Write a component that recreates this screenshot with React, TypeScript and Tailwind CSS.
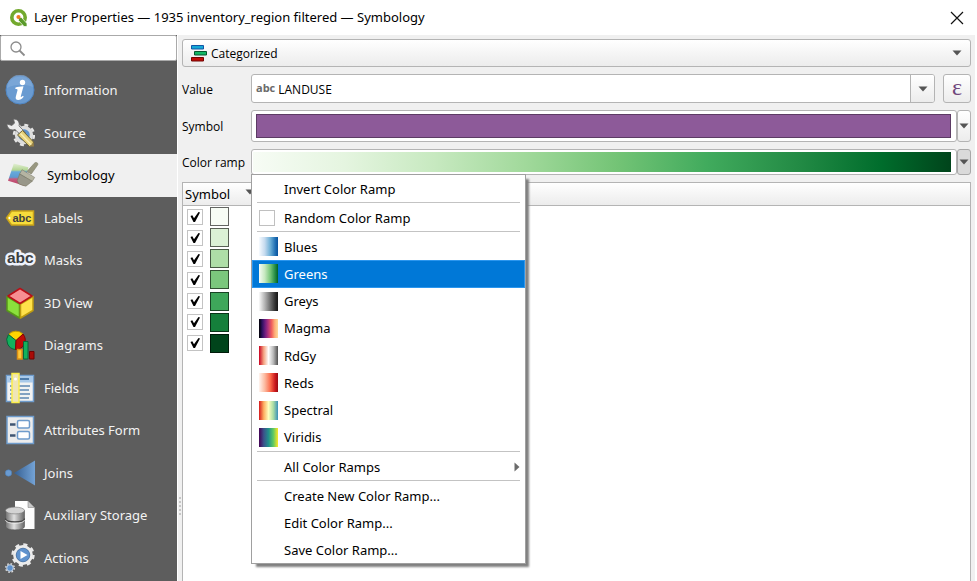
import { useState } from "react";
import type { ReactNode } from "react";

interface NavItem {
    label: string;
    icon: ReactNode;
}

interface Ramp {
    name: string;
    swatch: string;
}

const InformationIcon = () => (
    <svg viewBox="0 0 30 30" className="w-[30px] h-[30px]">
        <circle cx="15" cy="15" r="14" fill="#6a9bd1" stroke="#4f86c4" strokeWidth="1" />
        <path d="M2 13a13 13 0 0 1 26-1c-8-3-18-3-26 1z" fill="#86aedb" opacity=".6" />
        <circle cx="17.500" cy="7.500" r="2.700" fill="#fff" />
        <path d="M10.500 12.500c2-.5 5-1 8-1.200l-2.700 10c-.2 1 .8.800 2.200-.5l.7.900c-1.700 2.200-3.700 3.300-5.500 3.300-2.200 0-2.900-1.300-2.400-3.200l1.700-6.600c.2-.9-.3-1.200-2.200-1.200z" fill="#fff" />
    </svg>
);

const SourceIcon = () => (
    <svg viewBox="0 0 30 30" className="w-[30px] h-[30px]">
        <circle cx="19" cy="17" r="10" fill="none" stroke="#e6e6e6" strokeWidth="2.400" strokeDasharray="3.930 3.930" />
        <circle cx="19" cy="17" r="7.500" fill="#5f92c9" stroke="#dedede" strokeWidth="3.400" />
        <path d="M2 6l5 1.500L9.500 5 8.500 1c4 0 6.500 3 5.500 7l7 7-3.500 3.500-7.500-7C6 13 2 10.500 2 6z" fill="#ececec" stroke="#666" strokeWidth=".8" />
        <path d="M12.500 17l5-4.500 11 11.500c-.5 2.500-1.500 3.500-4 4.500z" fill="#e6d17a" stroke="#6d6335" strokeWidth="1" />
        <path d="M15.500 15.500l11 11.500" stroke="#f8edb2" strokeWidth="1.500" />
        <path d="M24.500 28.500l4-4 .5 4z" fill="#9a8348" />
    </svg>
);

const SymbologyIcon = () => (
    <svg viewBox="0 0 32 28" className="w-8 h-7">
        <defs>
            <linearGradient id="paint" x1="0" x2="0" y1="0" y2="1">
                <stop offset="0" stopColor="#e4efd6" />
                <stop offset=".3" stopColor="#b3d693" />
                <stop offset=".38" stopColor="#66a9dc" />
                <stop offset=".62" stopColor="#5d9bd0" />
                <stop offset=".7" stopColor="#c65a7d" />
                <stop offset="1" stopColor="#b83e63" />
            </linearGradient>
        </defs>
        <path d="M6 2l15 4-4 19L0 20z" fill="url(#paint)" />
        <path d="M19.500 10.500l7.500-8.500c1.500-2 5-.5 3.500 1.800L24 13z" fill="#989780" stroke="#7a7962" strokeWidth=".6" />
        <path d="M14.500 8.500l13 8-2.500 4-13-7.500z" fill="#b5b4a2" stroke="#7b7a68" strokeWidth=".6" />
        <path d="M12 13l13 7.500-6.500 5-4-1-3.500-1.500-1.500-3z" fill="#98978a" stroke="#77765f" strokeWidth=".6" />
    </svg>
);

const LabelsIcon = () => (
    <svg viewBox="0 0 30 30" className="w-[30px] h-[30px]">
        <path d="M1.500 15l5-7h22v14h-22z" fill="#f7dc3b" stroke="#c9a31a" strokeWidth="1.500" />
        <circle cx="4.500" cy="15" r="1" fill="#fff" />
        <text x="7.500" y="18.500" fontSize="11" fontWeight="700" fontFamily="Liberation Sans, sans-serif" fill="#3d3f3f">abc</text>
    </svg>
);

const MasksIcon = () => (
    <svg viewBox="0 0 32 30" className="w-8 h-[30px]">
        <text x="2" y="18" fontSize="16" fontWeight="700" fontFamily="Liberation Sans, sans-serif" fill="#3b3e40" stroke="#eef2fc" strokeWidth="5" strokeLinejoin="round" paintOrder="stroke">abc</text>
    </svg>
);

const CubeIcon = () => (
    <svg viewBox="0 0 30 32" className="w-[30px] h-8">
        <g strokeLinejoin="round" strokeWidth="1.500">
            <path d="M2 9.500v14L14.500 31V17z" fill="#8be03c" stroke="#57981a" />
            <path d="M28 9.500v14L15.500 31V17z" fill="#ffe14a" stroke="#bd9b10" />
            <path d="M15 1.500L27 9l-12 7.500L3 9z" fill="#f78f92" stroke="#b80f16" />
        </g>
    </svg>
);

const DiagramsIcon = () => (
    <svg viewBox="0 0 30 32" className="w-[30px] h-8">
        <path d="M11 11.500L3.500 5.500A10 10 0 0 1 18 5z" fill="#ffd400" stroke="#c59a00" />
        <path d="M11 11.500L3.500 5.500a9.500 9.500 0 0 0 7 15z" fill="#12b15c" stroke="#08653a" />
        <path d="M11 11.500L18 5a9.500 9.500 0 0 1-7.500 15.500z" fill="#c00c07" stroke="#7f0503" />
        <path d="M12.500 20.500h4.500v9.500h-4.500z" fill="#ffc83a" stroke="#dc8e14" strokeWidth="1.500" />
        <path d="M18.500 12.500H23V30h-4.500z" fill="#12b15c" stroke="#08653a" />
        <path d="M24.500 22.500H29V30h-4.500z" fill="#a90c07" stroke="#6f0503" />
    </svg>
);

const FieldsIcon = () => (
    <svg viewBox="0 0 30 32" className="w-[30px] h-8">
        <path d="M1.500 3.500h27v26h-27z" fill="#f2f2f2" stroke="#6f9ccc" strokeWidth="1.500" />
        <path d="M2 4h26v6.500H2z" fill="#a9c9ea" />
        <path d="M15 7h9M5 7h2" stroke="#4e7cab" strokeWidth="2" />
        <path d="M5 14h20M5 18h19M5 22h20M5 26h19" stroke="#5d87b3" strokeWidth="1.500" />
        <path d="M7 1.500h7v29H7z" fill="#efe5b6" stroke="#fbed4a" strokeWidth="1.500" />
        <circle cx="10.500" cy="7" r="1.500" fill="#fff" />
    </svg>
);

const FormIcon = () => (
    <svg viewBox="0 0 30 30" className="w-[30px] h-[30px]">
        <path d="M2 1.500h26.500v27H2z" fill="#ececec" stroke="#6f9ccc" strokeWidth="1.500" />
        <path d="M5 9.500h5.500M5 20.500h5.500" stroke="#3f5573" strokeWidth="2.500" />
        <rect x="12.500" y="5.500" width="12" height="7.500" rx="1.500" fill="#fff" stroke="#6f9ccc" strokeWidth="1.500" />
        <rect x="12.500" y="16.500" width="12" height="7.500" rx="1.500" fill="#fff" stroke="#6f9ccc" strokeWidth="1.500" />
    </svg>
);

const JoinsIcon = () => (
    <svg viewBox="0 0 30 30" className="w-[30px] h-[30px]">
        <defs>
            <linearGradient id="joins" x1="0" x2="1">
                <stop offset="0" stopColor="#355f92" />
                <stop offset="1" stopColor="#74a3d6" />
            </linearGradient>
        </defs>
        <circle cx="3.500" cy="15" r="3.200" fill="#6a9bd1" stroke="#4a7db7" strokeWidth=".6" />
        <path d="M9 15L30 2.500v25z" fill="url(#joins)" />
    </svg>
);

const StorageIcon = () => (
    <svg viewBox="0 0 30 32" className="w-[30px] h-8">
        <defs>
            <linearGradient id="disk" x1="0" x2="1">
                <stop offset="0" stopColor="#6e6e6e" />
                <stop offset=".45" stopColor="#e0e0e0" />
                <stop offset="1" stopColor="#656565" />
            </linearGradient>
        </defs>
        <path d="M10 2h13l6.500 6.500V30H10z" fill="#fdfdfd" />
        <path d="M23 2v6.500h6.500z" fill="#c9c9c9" stroke="#777" strokeWidth=".5" />
        <path d="M.5 11.500v16c0 4.500 19 4.500 19 0v-16z" fill="url(#disk)" stroke="#555" strokeWidth=".6" />
        <ellipse cx="10" cy="11.500" rx="9.500" ry="3.400" fill="#d3d3d3" stroke="#757575" strokeWidth=".6" />
        <path d="M.5 19.500c0 4.500 19 4.500 19 0" fill="none" stroke="#444" strokeWidth="1.300" />
        <path d="M.5 21c0 4.500 19 4.500 19 0" fill="none" stroke="#eee" strokeWidth=".8" />
    </svg>
);

const ActionsIcon = () => (
    <svg viewBox="0 0 30 32" className="w-[30px] h-8">
        <circle cx="18" cy="13" r="10.500" fill="none" stroke="#e9e9e9" strokeWidth="2.400" strokeDasharray="4.120 4.120" />
        <circle cx="18" cy="13" r="8.200" fill="#5f92cd" stroke="#ececec" strokeWidth="3.400" />
        <circle cx="18" cy="13" r="6.800" fill="#5f92cd" stroke="#39659a" strokeWidth=".7" />
        <path d="M15.500 9l7 4-7 4z" fill="#fff" />
        <circle cx="5" cy="26" r="4.300" fill="none" stroke="#ddd" strokeWidth="1.400" strokeDasharray="1.690 1.690" />
        <circle cx="5" cy="26" r="3.300" fill="#5f92cd" stroke="#cfdcec" strokeWidth=".9" />
    </svg>
);

const CategorizedIcon = () => (
    <svg viewBox="0 0 18 18" className="w-[18px] h-[18px]">
        <path d="M1.500 1.500h12v3.500h-12z" fill="#13a8d6" stroke="#1255a5" />
        <path d="M4.500 7.500h12V11h-12z" fill="#13b765" stroke="#08572f" />
        <path d="M1.500 13.500h12V17h-12z" fill="#c20d08" stroke="#700502" />
    </svg>
);

const QgisLogo = () => (
    <svg viewBox="0 0 20 18" className="w-5 h-[18px]">
        <circle cx="9.500" cy="8.500" r="6.700" fill="none" stroke="#73a92e" strokeWidth="3.600" />
        <path d="M9.500 8.500h3l5.500 6v3h-3l-5.500-6z" fill="#5a9a2a" stroke="#fff" strokeWidth=".7" />
        <circle cx="9.500" cy="8" r="2.100" fill="#ee7a22" />
    </svg>
);

const DownArrow = () => (
    <svg viewBox="0 0 10 6" className="w-[10px] h-[6px] shrink-0">
        <path d="M.5.500h9L5 5.500z" fill="#555" />
    </svg>
);

const navItems: NavItem[] = [
    { label: "Information", icon: <InformationIcon /> },
    { label: "Source", icon: <SourceIcon /> },
    { label: "Symbology", icon: <SymbologyIcon /> },
    { label: "Labels", icon: <LabelsIcon /> },
    { label: "Masks", icon: <MasksIcon /> },
    { label: "3D View", icon: <CubeIcon /> },
    { label: "Diagrams", icon: <DiagramsIcon /> },
    { label: "Fields", icon: <FieldsIcon /> },
    { label: "Attributes Form", icon: <FormIcon /> },
    { label: "Joins", icon: <JoinsIcon /> },
    { label: "Auxiliary Storage", icon: <StorageIcon /> },
    { label: "Actions", icon: <ActionsIcon /> },
];

const ramps: Ramp[] = [
    { name: "Blues", swatch: "bg-[linear-gradient(90deg,#f7fbff,#c6dbef_30%,#6baed6_60%,#2171b5_85%,#08519c)]" },
    { name: "Greens", swatch: "bg-[linear-gradient(90deg,#f7fcf5,#c7e9c0_30%,#74c476_60%,#238b45_85%,#006022)]" },
    { name: "Greys", swatch: "bg-[linear-gradient(90deg,#fafafa,#b5b5b5_30%,#6b6b6b_60%,#303030_85%,#151515)]" },
    { name: "Magma", swatch: "bg-[linear-gradient(90deg,#000004,#2c115f,#721f81,#b73779,#f1605d,#feb078,#fcd99a)]" },
    { name: "RdGy", swatch: "bg-[linear-gradient(90deg,#ca0020,#f4a582,#ffffff,#bababa,#505050)]" },
    { name: "Reds", swatch: "bg-[linear-gradient(90deg,#fff5f0,#fcbba1_30%,#fb6a4a_60%,#cb181d_85%,#950b13)]" },
    { name: "Spectral", swatch: "bg-[linear-gradient(90deg,#d7191c,#fdae61,#ffffbf,#abdda4,#3b90b8)]" },
    { name: "Viridis", swatch: "bg-[linear-gradient(90deg,#440154,#3b528b,#21908c,#5dc963,#fde725)]" },
];

const categories = ["#f7fcf5", "#dbf1d5", "#aedea7", "#7bc77c", "#3ea75a", "#157f3b", "#00441b"];

const Separator = () => <div role="separator" className="mx-[5px] h-[2px] border-t border-[#c3c3c3]" />;

function MenuItem({ children, icon, active, onClick }: { children: ReactNode; icon?: ReactNode; active?: boolean; onClick?: () => void }) {
    return (
        <button
            type="button"
            role="menuitem"
            onClick={onClick}
            className={`flex h-full min-h-[27px] w-full items-center border text-left ${
                active ? "border-[#2b96ee] bg-[#0078d7] text-white" : "border-transparent"
            }`}
        >
            <span className="flex w-[31px] shrink-0 pl-[6px]">{icon}</span>
            {children}
        </button>
    );
}

function RampMenu({ selected, onSelect }: { selected: string; onSelect: (name: string) => void }) {
    return (
        <div
            role="menu"
            className="absolute left-0 top-full z-10 -mt-px w-[275px] border border-[#a0a0a0] bg-white font-['Noto_Sans',sans-serif] text-[13px] leading-5 text-black shadow-[4px_4px_2px_-1px_#808080]"
        >
            <MenuItem>Invert Color Ramp</MenuItem>
            <Separator />
            <MenuItem icon={<span className="h-4 w-4 border border-[#c0c0c0] bg-white" />}>Random Color Ramp</MenuItem>
            <Separator />
            <div className="grid h-[218px] grid-rows-8">
                {ramps.map((ramp) => (
                    <MenuItem
                        key={ramp.name}
                        active={ramp.name === selected}
                        onClick={() => onSelect(ramp.name)}
                        icon={<span className={`h-[19px] w-[19px] ${ramp.swatch}`} />}
                    >
                        {ramp.name}
                    </MenuItem>
                ))}
            </div>
            <Separator />
            <MenuItem>
                All Color Ramps
                <svg viewBox="0 0 6 10" className="ml-auto mr-1 h-[10px] w-[6px]">
                    <path d="M.5.500v9L5.500 5z" fill="#6b6b6b" />
                </svg>
            </MenuItem>
            <Separator />
            <MenuItem>Create New Color Ramp...</MenuItem>
            <MenuItem>Edit Color Ramp...</MenuItem>
            <MenuItem>Save Color Ramp...</MenuItem>
        </div>
    );
}

function Sidebar({ current, onChange }: { current: string; onChange: (label: string) => void }) {
    return (
        <aside className="flex w-[177px] shrink-0 flex-col bg-[#5d5d5d] font-['Noto_Sans',sans-serif]">
            <label className="flex h-[26px] items-center rounded-[2px] border border-[#aaa] bg-white pl-2">
                <svg viewBox="0 0 17 17" className="h-[17px] w-[17px] shrink-0" fill="none" stroke="#8c8c8c">
                    <circle cx="7" cy="7" r="5" strokeWidth="1.300" />
                    <path d="M10.500 10.500l5 5" strokeWidth="1.800" />
                </svg>
                <input type="text" aria-label="Search" className="w-full min-w-0 px-2 text-[13px] outline-none" />
            </label>
            <nav className="mt-2 grid h-[510px] grid-rows-12">
                {navItems.map((item) => (
                    <button
                        key={item.label}
                        type="button"
                        onClick={() => onChange(item.label)}
                        className={`flex items-center text-left text-[13px] leading-5 ${
                            item.label === current ? "bg-[#f0f0f0] pl-2 text-black" : "pl-[5px] text-[#f3f3f3]"
                        }`}
                    >
                        <span className="mr-2 flex w-[31px] shrink-0">{item.icon}</span>
                        {item.label}
                    </button>
                ))}
            </nav>
        </aside>
    );
}

export default function App() {
    const [tab, setTab] = useState("Symbology");
    const [ramp, setRamp] = useState("Greens");
    const [value, setValue] = useState("LANDUSE");

    return (
        <div className="flex min-h-screen flex-col bg-white font-['Open_Sans','Noto_Sans',sans-serif] text-black">
            <header className="flex h-[35px] items-center pl-[9px] pr-[13px]">
                <QgisLogo />
                <h1 className="ml-[5px] pb-px font-['Noto_Sans',sans-serif] text-[13px] leading-5">Layer Properties — 1935 inventory_region filtered — Symbology</h1>
                <button type="button" aria-label="Close" className="ml-auto">
                    <svg viewBox="0 0 14 14" className="h-[14px] w-[14px]">
                        <path d="M1 1l12 12M13 1L1 13" stroke="#111" strokeWidth="1.200" />
                    </svg>
                </button>
            </header>

            <div className="mr-[2px] flex flex-1 bg-[#f0f0f0]">
                <Sidebar current={tab} onChange={setTab} />

                <div className="flex w-[5px] shrink-0 flex-col items-center gap-[2px] border-l border-white pt-[462px]">
                    {[0, 1, 2, 3, 4].map((i) => (
                        <span key={i} className="h-[2px] w-[2px] bg-[#c6c6c6]" />
                    ))}
                </div>

                <main className="flex min-w-0 flex-1 flex-col gap-[7px] pr-1 pt-1 text-[12px] leading-4">
                    <div className="grid h-7 items-center rounded-[3px] border border-[#b4b4b4] bg-linear-to-b from-white to-[#ececec]">
                        <span className="col-start-1 row-start-1 pl-[7px]">
                            <CategorizedIcon />
                        </span>
                        <select aria-label="Renderer" className="col-start-1 row-start-1 h-full appearance-none pl-7 pt-[2px] outline-none">
                            <option>Categorized</option>
                        </select>
                        <span className="pointer-events-none col-start-1 row-start-1 justify-self-end pr-2">
                            <DownArrow />
                        </span>
                    </div>

                    <div className="flex h-[29px] items-center">
                        <label htmlFor="value" className="w-[69px] shrink-0 pt-[2px]">
                            Value
                        </label>
                        <div className="flex h-full min-w-0 flex-1 overflow-hidden rounded-[3px] border border-[#b4b4b4] bg-white">
                            <span className="self-center pb-[2px] pl-1 text-[11px] font-bold text-[#6b6b6b]">abc</span>
                            <input
                                id="value"
                                type="text"
                                value={value}
                                onChange={(e) => setValue(e.target.value)}
                                className="min-w-0 flex-1 pl-[3px] pt-[2px] outline-none"
                            />
                            <button
                                type="button"
                                aria-label="Choose field"
                                className="flex w-6 items-center justify-center border-l border-[#b4b4b4] bg-linear-to-b from-white to-[#ececec]"
                            >
                                <DownArrow />
                            </button>
                        </div>
                        <button
                            type="button"
                            aria-label="Expression"
                            className="ml-2 flex h-full w-7 items-center justify-center rounded-[3px] border border-[#b4b4b4] bg-linear-to-b from-white to-[#ececec] pb-1 font-['Liberation_Serif',serif] text-[24px] text-[#70477c]"
                        >
                            ε
                        </button>
                    </div>

                    <div className="flex h-8 items-center">
                        <span className="w-[69px] shrink-0 pt-[2px]">Symbol</span>
                        <button type="button" aria-label="Symbol" className="h-full flex-1 rounded-[3px] border border-[#b4b4b4] bg-white py-[3px] pl-1 pr-[5px]">
                            <span className="block h-full border border-[#5c3b64] bg-[#8d5a99]" />
                        </button>
                        <button
                            type="button"
                            aria-label="Symbol options"
                            className="flex h-full w-[14px] items-center justify-center rounded-[3px] border border-[#b4b4b4] bg-linear-to-b from-white to-[#ececec]"
                        >
                            <DownArrow />
                        </button>
                    </div>

                    <div className="flex h-[26px] items-center">
                        <span className="w-[69px] shrink-0 pt-[2px]">Color ramp</span>
                        <div className="relative flex h-full min-w-0 flex-1">
                            <button type="button" aria-label="Color ramp" className="h-full flex-1 rounded-[3px] border border-[#b4b4b4] bg-white py-[2px] pl-px pr-[5px]">
                                <span className="block h-full bg-[linear-gradient(90deg,#f7fcf5,#e5f5e0_13%,#c7e9c0_26%,#a1d99b_39%,#74c476_52%,#41ab5d_65%,#238b45_78%,#006d2c_90%,#00441b)]" />
                            </button>
                            <button
                                type="button"
                                aria-label="Color ramp options"
                                className="flex h-full w-[14px] items-center justify-center rounded-[3px] border border-[#a8a8a8] bg-[#dadada]"
                            >
                                <DownArrow />
                            </button>
                            <RampMenu selected={ramp} onSelect={setRamp} />
                        </div>
                    </div>

                    <section className="flex flex-1 flex-col border-x border-t border-[#b4b4b4] bg-white">
                        <div className="flex h-[23px] items-center border-b border-[#b4b4b4] bg-linear-to-b from-white to-[#ececec] pl-[2px] font-['Noto_Sans',sans-serif] text-[13px]">
                            <span className="w-[60px]">Symbol</span>
                            <svg viewBox="0 0 10 6" className="mb-1 h-[6px] w-[10px]">
                                <path d="M.5.500h9L5 5.500z" fill="#555" />
                            </svg>
                        </div>
                        <ul className="grid h-[148px] grid-rows-7">
                            {categories.map((color, i) => (
                                <li key={color} className="flex items-center gap-[7px] pl-1">
                                    <span className="grid h-4 w-4">
                                        <input
                                            type="checkbox"
                                            defaultChecked
                                            aria-label={`Category ${i + 1}`}
                                            className="peer col-start-1 row-start-1 appearance-none border border-[#c3c3c3] bg-white"
                                        />
                                        <svg viewBox="0 0 16 16" className="pointer-events-none invisible col-start-1 row-start-1 h-4 w-4 peer-checked:visible">
                                            <path d="M3.500 7l1.800-.8 1.700 3L11.500 3l1.500.5-5 9.500H6.500z" fill="#000" />
                                        </svg>
                                    </span>
                                    <span className="h-[19px] w-[19px] border border-black/60" style={{ backgroundColor: color }} />
                                </li>
                            ))}
                        </ul>
                    </section>
                </main>
            </div>
        </div>
    );
}
